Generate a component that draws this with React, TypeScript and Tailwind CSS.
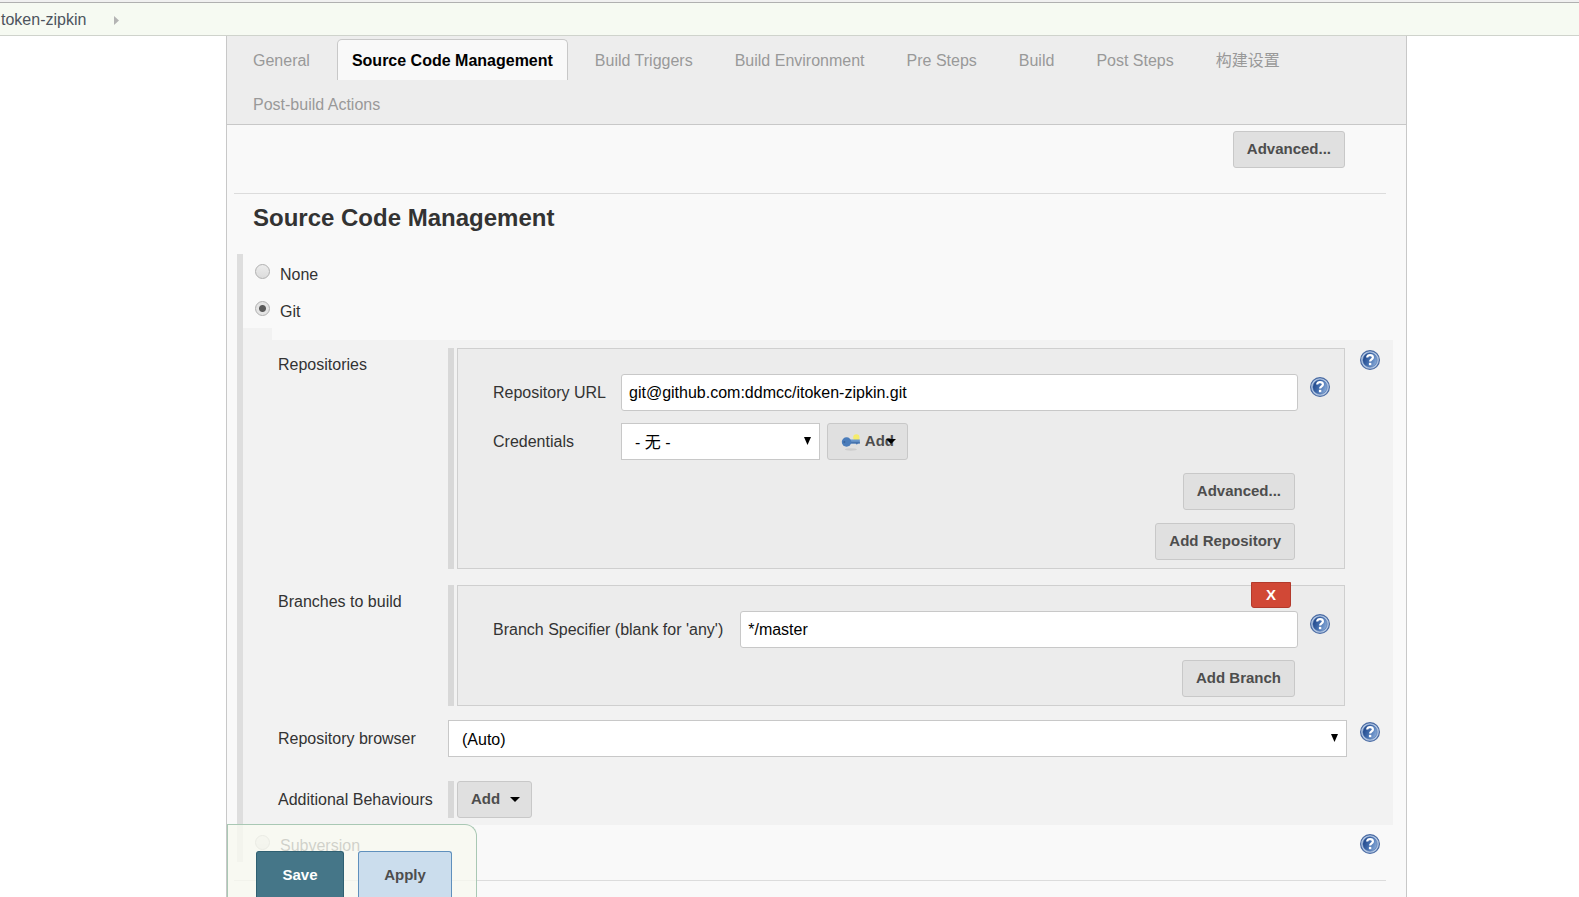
import { useState } from "react";
import type { ReactNode } from "react";
import clsx from "clsx";

const tabs = [
  "General",
  "Source Code Management",
  "Build Triggers",
  "Build Environment",
  "Pre Steps",
  "Build",
  "Post Steps",
  "构建设置",
  "Post-build Actions",
];

function HelpButton({ label }: { label: string }) {
  return (
    <button type="button" aria-label={label} className="block size-5 shrink-0">
      <svg viewBox="0 0 20 20" className="size-5">
        <defs>
          <linearGradient id="help-face" x1="0" y1="0.3" x2="1" y2="0.7">
            <stop offset="0" stopColor="#1f4588" />
            <stop offset="0.5" stopColor="#4570b0" />
            <stop offset="1" stopColor="#8fb0dc" />
          </linearGradient>
        </defs>
        <circle cx="10" cy="10" r="9.4" fill="#b4c8e4" stroke="#4a6ba3" strokeWidth="1.2" />
        <circle cx="10" cy="10" r="7.2" fill="url(#help-face)" stroke="#3f65a3" strokeWidth="0.5" />
        <path
          d="M7.2 7.6C7.2 5.9 8.4 5.1 10 5.1S12.900 5.9 12.9 7.4C12.9 9.4 10.1 9.3 10.1 11.600"
          fill="none"
          stroke="#fff"
          strokeWidth="2.2"
        />
        <rect x="8.9" y="12.8" width="2.400" height="2.400" fill="#fff" />
      </svg>
    </button>
  );
}

function KeyIcon() {
  return (
    <svg viewBox="0 0 20 18" className="h-[18px] w-5">
      <ellipse cx="10" cy="16.500" rx="6" ry="1.2" fill="#cdcdcd" />
      <circle cx="15.5" cy="4.4" r="3.2" fill="#f5ec6c" />
      <path d="M8 6.600h11v3.8h-2l-1 1-1.200-1H8z" fill="#6a97cc" />
      <path d="M8 8.800h11v1.600h-2l-1 1-1.200-1H8z" fill="#4673ad" />
      <ellipse cx="5.600" cy="9" rx="4.800" ry="4.800" fill="#4a7cba" />
      <circle cx="3.400" cy="9" r="1" fill="#3a649c" />
    </svg>
  );
}

function Caret({ className }: { className?: string }) {
  return (
    <svg viewBox="0 0 10 5" className={clsx("h-[5px] w-[10px]", className)}>
      <path d="M0 0h10L5 5z" fill="#000" />
    </svg>
  );
}

function GrayButton({ children, className }: { children: ReactNode; className?: string }) {
  return (
    <button
      type="button"
      className={clsx(
        "flex h-[37px] items-center rounded-[3px] border border-[#c8c8c8] bg-[#e0e0e0] px-[13px] text-[15px] font-bold text-[#4d4d4d]",
        className
      )}
    >
      {children}
    </button>
  );
}

function Select({ id, option, className }: { id: string; option: string; className?: string }) {
  return (
    <div className={clsx("relative", className)}>
      <select
        id={id}
        className="block h-[37px] w-full appearance-none border border-[#c8c8c8] bg-white pt-[3px] pl-[13px] text-base text-black"
      >
        <option>{option}</option>
      </select>
      <svg viewBox="0 0 7 8" className="pointer-events-none absolute top-[14px] right-[9px] h-2 w-[7px]">
        <path d="M0 0h7L3.500 8z" fill="#000" />
      </svg>
    </div>
  );
}

function TextInput({ id, value }: { id: string; value: string }) {
  return (
    <input
      id={id}
      type="text"
      defaultValue={value}
      className="h-[37px] min-w-0 flex-1 rounded-[3px] border border-[#c8c8c8] bg-white px-[7px] text-base text-black"
    />
  );
}

function Radio({ label, value, checked, onChange }: { label: string; value: string; checked: boolean; onChange: () => void }) {
  return (
    <label className="flex h-[37px] items-center pt-1">
      <input
        type="radio"
        name="scm"
        value={value}
        checked={checked}
        onChange={onChange}
        className="mr-[10px] mb-[6px] size-[15px] appearance-none rounded-full border border-[#b0b0b0] bg-linear-to-b from-[#ececec] to-[#dcdcdc] checked:bg-[radial-gradient(circle,#5a5a5a_3px,#e4e4e4_4px)]"
      />
      {label}
    </label>
  );
}

function Field({ label, help, className, children }: { label: ReactNode; help?: string; className?: string; children: ReactNode }) {
  return (
    <div className={clsx("flex items-start", className)}>
      <div className="w-[170px] shrink-0">{label}</div>
      <div className="min-w-0 flex-1">{children}</div>
      <div className="ml-[13px] w-[33px] shrink-0 pt-[2px]">{help && <HelpButton label={help} />}</div>
    </div>
  );
}

// Repeatable block with the drag handle on its left
function Chunk({ children }: { children: ReactNode }) {
  return (
    <div className="mr-[2px] flex gap-[3px]">
      <div className="w-[6px] shrink-0 bg-[#d8d8d8]" />
      <div className="relative flex-1 border border-[#cfcfcf] bg-[#ececec] pt-[25px] pr-[14px] pb-2 pl-[35px]">{children}</div>
    </div>
  );
}

export default function App() {
  const [tab, setTab] = useState("Source Code Management");
  const [scm, setScm] = useState("git");

  return (
    <div className="flex h-screen flex-col overflow-hidden bg-white font-['Liberation_Sans','Noto_Sans_CJK_SC',sans-serif] text-base text-[#333]">
      <header className="flex h-9 shrink-0 items-center gap-7 border-b border-[#cfd3cc] bg-[#f6faf2] pl-px shadow-[inset_0_2px_#f0f0f0,inset_0_3px_#b0b0b0]">
        <a href="#" className="pt-[5px] text-[#4d545d]">
          token-zipkin
        </a>
        <svg viewBox="0 0 5 9" className="mt-[5px] h-[9px] w-[5px]">
          <path d="M0 0l5 4.5L0 9z" fill="#b4b4b4" />
        </svg>
      </header>

      <main className="mr-[172px] ml-[226px] min-h-0 flex-1 overflow-hidden border-x border-[#c8c8c8] bg-[#f9f9f9]">
        <nav className="flex flex-wrap gap-x-3 gap-y-[3px] border-b border-[#c8c8c8] bg-[#ededed] pt-[3px] pl-[11px]">
          {tabs.map((name) => (
            <button
              key={name}
              type="button"
              onClick={() => setTab(name)}
              className={clsx(
                "h-[41px] rounded-t-[5px] border border-b-0 px-[14px] pt-px",
                name === tab ? "border-[#c8c8c8] bg-[#f9f9f9] font-bold text-black" : "border-transparent text-[#999]"
              )}
            >
              {name}
            </button>
          ))}
        </nav>

        <form>
          <div className="flex justify-end pt-[6px] pr-[61px] pb-[25px]">
            <GrayButton>Advanced...</GrayButton>
          </div>

          <section className="ml-[7px]">
            <h1 className="mr-5 border-t border-[#dcdcdc] pt-2 pl-[19px] text-2xl leading-8 font-bold">
              Source Code Management
            </h1>

            <div className="mt-5 mr-[13px] ml-[3px] flex">
              <div className="w-[6px] shrink-0 bg-[#dedede]" />
              <div className="min-w-0 flex-1">
                <div className="pl-3">
                  <Radio label="None" value="none" checked={scm === "none"} onChange={() => setScm("none")} />
                  <Radio label="Git" value="git" checked={scm === "git"} onChange={() => setScm("git")} />
                </div>

                <div className="h-3 w-[29px] bg-[#f2f2f2]" />
                <div className="bg-[#f2f2f2] pt-2 pb-[7px] pl-[35px]">
                  <Field label={<p className="pt-[5px]">Repositories</p>} help="Help for repositories">
                    <Chunk>
                      <div className="flex items-center">
                        <label htmlFor="url" className="w-32">
                          Repository URL
                        </label>
                        <TextInput id="url" value="git@github.com:ddmcc/itoken-zipkin.git" />
                        <div className="mb-3 ml-3">
                          <HelpButton label="Help for repository URL" />
                        </div>
                      </div>
                      <div className="mt-3 flex items-center">
                        <label htmlFor="credentials" className="w-32">
                          Credentials
                        </label>
                        <Select id="credentials" option="- 无 -" className="w-[199px]" />
                        <GrayButton className="relative ml-[7px] w-[81px]">
                          <KeyIcon />
                          <span className="ml-1">Add</span>
                          <Caret className="absolute right-[11px]" />
                        </GrayButton>
                      </div>
                      <div className="mt-[13px] mr-[35px] flex flex-col items-end gap-[13px]">
                        <GrayButton>Advanced...</GrayButton>
                        <GrayButton>Add Repository</GrayButton>
                      </div>
                    </Chunk>
                  </Field>

                  <Field label={<p className="pt-[5px]">Branches to build</p>} className="mt-4">
                    <Chunk>
                      <button
                        type="button"
                        aria-label="Delete branch"
                        className="absolute -top-1 right-[53px] h-[26px] w-10 rounded-b-[3px] border border-[#b33a2c] bg-[#d14836] text-[15px] leading-6 font-bold text-white"
                      >
                        X
                      </button>
                      <div className="flex items-center">
                        <label htmlFor="branch" className="mr-[17px]">
                          Branch Specifier (blank for 'any')
                        </label>
                        <TextInput id="branch" value="*/master" />
                        <div className="mb-3 ml-3">
                          <HelpButton label="Help for branch specifier" />
                        </div>
                      </div>
                      <div className="mt-3 mr-[35px] flex justify-end">
                        <GrayButton>Add Branch</GrayButton>
                      </div>
                    </Chunk>
                  </Field>

                  <Field
                    label={
                      <label htmlFor="browser" className="block pt-[7px]">
                        Repository browser
                      </label>
                    }
                    help="Help for repository browser"
                    className="mt-[14px]"
                  >
                    <Select id="browser" option="(Auto)" />
                  </Field>

                  <Field label={<p className="pt-[7px]">Additional Behaviours</p>} className="mt-6">
                    <div className="flex gap-[3px]">
                      <div className="w-[6px] bg-[#d8d8d8]" />
                      <GrayButton className="pr-[11px]">
                        Add
                        <Caret className="ml-[10px]" />
                      </GrayButton>
                    </div>
                  </Field>
                </div>

                <div className="flex items-center justify-between pr-[13px] pl-3">
                  <Radio label="Subversion" value="svn" checked={scm === "svn"} onChange={() => setScm("svn")} />
                  <HelpButton label="Help for Subversion" />
                </div>
              </div>
            </div>

            <hr className="mt-[18px] mr-5 border-[#dcdcdc]" />
          </section>
        </form>
      </main>

      <div className="fixed bottom-0 left-[227px] flex h-[73px] items-end gap-[14px] rounded-tr-xl border border-b-0 border-[#a9c8b4] bg-[#f7f9f0]/80 pr-6 pl-7">
        <button type="button" className="h-[46px] w-[88px] rounded-t-[3px] border border-b-0 border-[#2f6072] bg-[#457688] pt-[2px] text-[15px] font-bold text-white">
          Save
        </button>
        <button type="button" className="h-[46px] w-[94px] rounded-t-[3px] border border-b-0 border-[#5f90bd] bg-[#cbdded] pt-[2px] text-[15px] font-bold text-[#4d4d4d]">
          Apply
        </button>
      </div>
    </div>
  );
}
